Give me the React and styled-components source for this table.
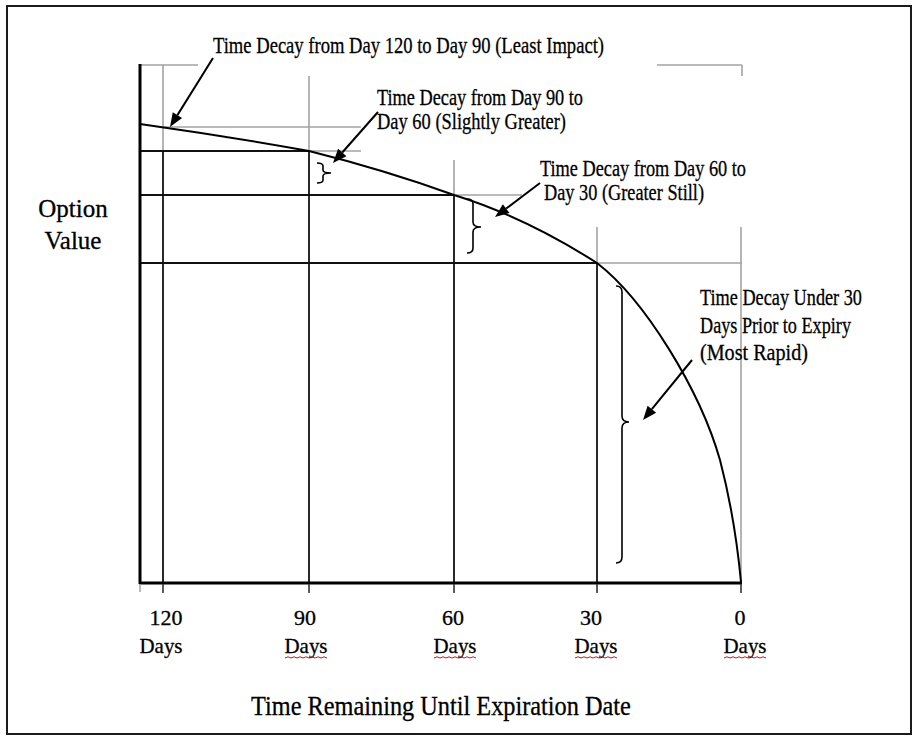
import React from "react";
import styled, { createGlobalStyle } from "styled-components";

const GlobalStyle = createGlobalStyle`
	html, body {
		margin: 0;
		padding: 0;
		background: #fff;
	}
	body {
		font-family: "Liberation Serif", "Times New Roman", serif;
		color: #000;
	}
`

const Frame = styled.div`
	box-sizing: border-box;
	width: 906px;
	height: 730px;
	margin: 5px 0 0 6px;
	border: 2px solid #1a1a1a;
	display: flex;
	flex-direction: column;
`

const ChartRow = styled.div`
	display: flex;
`

const AxisLabel = styled.div`
	width: 130px;
	flex: none;
	padding-top: 186px;
	text-align: center;
	font-size: 25px;
	line-height: 32px;
	-webkit-text-stroke: 0.3px #000;
`

const Chart = styled.svg`
	display: block;
	flex: none;
	width: 772px;
	height: 684px;
	font-family: "Liberation Serif", "Times New Roman", serif;
`

const Label = styled.text`
	font-size: ${p => p.size || 23}px;
	fill: #000;
	stroke: #000;
	stroke-width: 0.3px;
`

const Title = styled.div`
	padding-right: 37px;
	text-align: center;
	font-size: 27px;
	line-height: 31px;
	-webkit-text-stroke: 0.3px #000;
`

const TitleText = styled.span`
	display: inline-block;
	transform: scaleX(0.9);
`

const GREY = "#a3a3a3";

// grid lines of the chart: [x1, y1, x2, y2]
const greyLines = [
	[140, 65, 198, 65],
	[657, 65, 742, 65],
	[742, 65, 742, 76],
	[163, 65, 163, 151],
	[309, 76, 309, 151],
	[454, 160, 454, 195],
	[597, 227, 597, 263],
	[741, 227, 741, 582],
	[163, 127, 361, 127],
	[309, 151, 361, 151],
	[454, 195, 522, 195],
	[597, 263, 742, 263],
]

const blackLines = [
	[163, 151, 163, 582],
	[309, 151, 309, 582],
	[454, 195, 454, 582],
	[597, 263, 597, 582],
	[140, 151, 309, 151],
	[140, 195, 454, 195],
	[140, 263, 597, 263],
]

const ticks = [
	{ x: 163, num: "120", nx: 166, dx: 161, squiggle: false },
	{ x: 309, num: "90", nx: 305, dx: 306, squiggle: true },
	{ x: 454, num: "60", nx: 453, dx: 455, squiggle: true },
	{ x: 597, num: "30", nx: 591, dx: 596, squiggle: true },
	{ x: 741, num: "0", nx: 740, dx: 745, squiggle: true },
]

const notes = [
	{ text: "Time Decay from Day 120 to Day 90 (Least Impact)", x: 213, w: 391, y: 53, size: 24 },
	{ text: "Time Decay from Day 90 to", x: 377, w: 206, y: 105 },
	{ text: "Day 60 (Slightly Greater)", x: 377, w: 189, y: 129 },
	{ text: "Time Decay from Day 60 to", x: 540, w: 206, y: 176 },
	{ text: "Day 30 (Greater Still)", x: 544, w: 160, y: 200 },
	{ text: "Time Decay Under 30", x: 700, w: 162, y: 305 },
	{ text: "Days Prior to Expiry", x: 700, w: 151, y: 333 },
	{ text: "(Most Rapid)", x: 700, w: 108, y: 360 },
]

const arrows = [
	[213, 58, 170, 127],
	[378, 112, 333, 163],
	[540, 183, 495, 217],
	[692, 360, 643, 420],
]

const braces = [
	{ x0: 317, xv: 323, xt: 331, y0: 163, ym: 173, y1: 183, r: 3 },
	{ x0: 467, xv: 473, xt: 481, y0: 199, ym: 227, y1: 253, r: 5 },
	{ x0: 616, xv: 622, xt: 629, y0: 286, ym: 422, y1: 563, r: 6 },
]

const bracePath = ({ x0, xv, xt, y0, ym, y1, r }) =>
	`M${x0},${y0} Q${xv},${y0} ${xv},${y0 + r} L${xv},${ym - r} Q${xv},${ym} ${xt},${ym} ` +
	`Q${xv},${ym} ${xv},${ym + r} L${xv},${y1 - r} Q${xv},${y1} ${x0},${y1}`

const squigglePath = (cx, y) => {
	let d = `M${cx - 21},${y}`
	for (let i = 0; i < 14; i++) d += ` l3,${i % 2 ? 1.2 : -1.2}`
	return d
}

const Arrow = ({ x1, y1, x2, y2 }) => {
	const a = Math.atan2(y2 - y1, x2 - x1)
	const len = 14, half = 5.5
	const bx = x2 - len * Math.cos(a)
	const by = y2 - len * Math.sin(a)
	const sx = half * Math.sin(a), sy = half * Math.cos(a)
	return (
		<g>
			<line x1={x1} y1={y1} x2={bx} y2={by} stroke="#000" strokeWidth="2" />
			<polygon points={`${x2},${y2} ${bx - sx},${by + sy} ${bx + sx},${by - sy}`} fill="#000" />
		</g>
	)
}

const curve =
	"M140,124 Q225,136 309,151 Q385,170 454,195 Q525,217 597,263 " +
	"C645,300 700,390 720,460 C733,510 738,550 741,582"

const DecayChart = () => (
	<Chart viewBox="138 7 772 684">
		{greyLines.map(([x1, y1, x2, y2], i) => (
			<line key={"g" + i} x1={x1} y1={y1} x2={x2} y2={y2} stroke={GREY} strokeWidth="1.6" />
		))}
		{blackLines.map(([x1, y1, x2, y2], i) => (
			<line key={"b" + i} x1={x1} y1={y1} x2={x2} y2={y2} stroke="#111" strokeWidth="1.8" />
		))}

		{/* axes */}
		<line x1="140" y1="64" x2="140" y2="584" stroke="#000" strokeWidth="3" />
		<line x1="139" y1="583" x2="742" y2="583" stroke="#000" strokeWidth="3" />
		<line x1="140" y1="584" x2="140" y2="592" stroke={GREY} strokeWidth="1.5" />

		<path d={curve} fill="none" stroke="#000" strokeWidth="2" />

		{braces.map((b, i) => (
			<path key={"br" + i} d={bracePath(b)} fill="none" stroke="#000" strokeWidth="1.6" />
		))}

		{arrows.map(([x1, y1, x2, y2], i) => (
			<Arrow key={"a" + i} x1={x1} y1={y1} x2={x2} y2={y2} />
		))}

		{notes.map(n => (
			<Label key={n.text} x={n.x} y={n.y} size={n.size} textLength={n.w} lengthAdjust="spacingAndGlyphs">
				{n.text}
			</Label>
		))}

		{ticks.map(t => (
			<g key={t.num}>
				<line x1={t.x} y1="584" x2={t.x} y2="593" stroke="#333" strokeWidth="1.6" />
				<Label x={t.nx} y="625" textAnchor="middle" size={22}>{t.num}</Label>
				<Label x={t.dx} y="653" textAnchor="middle" size={22} textLength="43" lengthAdjust="spacingAndGlyphs">Days</Label>
				{t.squiggle && (
					<path d={squigglePath(t.dx, 658)} fill="none" stroke="#c81818" strokeWidth="1" />
				)}
			</g>
		))}
	</Chart>
)

const App = () => {
	return (
		<>
			<GlobalStyle />
			<Frame>
				<ChartRow>
					<AxisLabel>Option<br />Value</AxisLabel>
					<DecayChart />
				</ChartRow>
				<Title><TitleText>Time Remaining Until Expiration Date</TitleText></Title>
			</Frame>
		</>
	)
}

export default App
